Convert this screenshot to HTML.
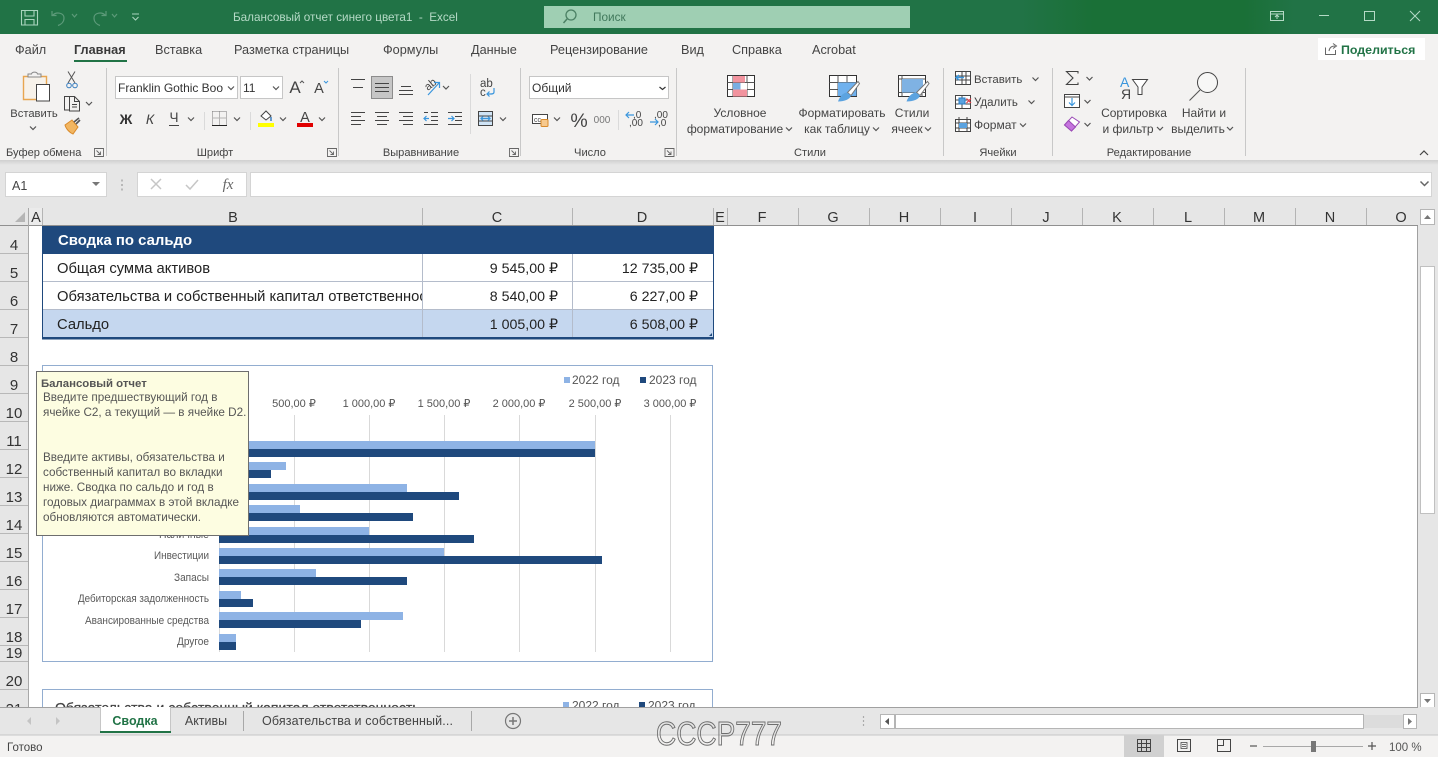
<!DOCTYPE html>
<html lang="ru"><head><meta charset="utf-8"><title>Балансовый отчет</title>
<style>
html,body{margin:0;padding:0;background:#fff;overflow:hidden}
svg{display:block}
text{font-family:"Liberation Sans","DejaVu Sans",sans-serif;white-space:pre}
.r{font-size:12px;fill:#444}
.g{font-size:11.1px;fill:#444}
.m{text-anchor:middle}
.e{text-anchor:end}
.tab{font-size:12.7px;fill:#444}
.h{font-size:14.5px;fill:#333;text-anchor:middle}
.n{font-size:15px;fill:#333;text-anchor:middle}
.c{font-size:14.75px;fill:#222}
.cr{font-size:14.2px;fill:#222;text-anchor:end}
.ax{font-size:11px;fill:#555;text-anchor:middle}
.cat{font-size:11.2px;fill:#595959;text-anchor:end}
.tip{font-size:11.7px;fill:#555}
.leg{font-size:12px;fill:#555}
.i{fill:none;stroke:#444;stroke-width:1}
.b{fill:none;stroke:#3a96dd;stroke-width:1.2}
.l1{fill:#8eb3e5}.d1{fill:#1f497d}
</style></head><body>
<svg xmlns="http://www.w3.org/2000/svg" width="1438" height="757" viewBox="0 0 1438 757">
<defs>
<path id="chev" d="M-3 -1.5L0 1.5L3 -1.5" fill="none" stroke="#555" stroke-width="1.2"/>
<g id="launch"><path d="M0 0H9V8H0Z M2 2L6 6M6 3V6H3" fill="none" stroke="#666" stroke-width=".9"/></g>
<clipPath id="b6"><rect x="43" y="282" width="379" height="28"/></clipPath>
<linearGradient id="tb" x1="0" y1="0" x2="1" y2="0">
<stop offset="0" stop-color="#217346"/><stop offset=".71" stop-color="#217346"/><stop offset=".76" stop-color="#1a7037"/><stop offset=".865" stop-color="#1a7037"/><stop offset=".9" stop-color="#217346"/><stop offset="1" stop-color="#217346"/>
</linearGradient>
<linearGradient id="sh" x1="0" y1="0" x2="0" y2="1"><stop offset="0" stop-color="#cfcfcf"/><stop offset="1" stop-color="#e6e6e6"/></linearGradient>
</defs>
<rect width="1438" height="757" fill="#fff"/>

<!-- title bar -->
<rect width="1438" height="34" fill="url(#tb)"/>
<g fill="none" stroke="#a9d4bd" stroke-width="1.1">
<path d="M21.5 10.5H37.5V25H21.5Z M25 10.5V16H34V10.5 M25 25V19.5H34V25"/>
</g>
<g fill="none" stroke="#5c9a79" stroke-width="1.2">
<path d="M52 11V15.5H56.5 M52.5 15.5C56 11.5 64 12.5 64 18C64 22 61 24.5 58 25.5"/>
<path d="M72 14L74.5 17L77 14"/>
<path d="M106 11V15.5H101.500 M105.500 15.500C102 11.500 94 12.500 94 18C94 22 97 24.500 100 25.500"/>
<path d="M112 14L114.500 17L117 14"/>
</g>
<path d="M132 14H139 M132.500 17L135.500 20L138.500 17" fill="none" stroke="#a9d4bd" stroke-width="1.100"/>
<text x="233" y="21" font-size="11.700" fill="#b5dac6">Балансовый отчет синего цвета1  -  Excel</text>
<rect x="544" y="6" width="366" height="22" fill="#9fcfb3"/>
<circle cx="571" cy="15" r="5" fill="none" stroke="#4b8064" stroke-width="1.300"/>
<path d="M567 19L563.500 23" stroke="#4b8064" stroke-width="1.500"/>
<text x="593" y="21" font-size="11.800" fill="#41795c">Поиск</text>
<g fill="none" stroke="#b5dac6" stroke-width="1">
<path d="M1270.500 11.500H1283.500V20.500H1270.500Z M1270.500 14H1283.500 M1277 19V15.500 M1275 17L1277 15L1279 17"/>
<path d="M1319 15.500H1329"/>
<path d="M1364.500 11.500H1374.500V20.500H1364.500Z"/>
<path d="M1410 11L1420 21 M1420 11L1410 21"/>
</g>

<!-- ribbon -->
<rect y="34" width="1438" height="126" fill="#f3f2f1"/>
<rect y="160" width="1438" height="48" fill="#e6e6e6"/>
<rect y="160" width="1438" height="5" fill="url(#sh)"/>
<text x="15" y="54" class="tab">Файл</text>
<text x="74" y="54" class="tab" font-weight="bold" style="fill:#3a3a3a">Главная</text>
<text x="155" y="54" class="tab">Вставка</text>
<text x="234" y="54" class="tab">Разметка страницы</text>
<text x="383" y="54" class="tab">Формулы</text>
<text x="471" y="54" class="tab">Данные</text>
<text x="550" y="54" class="tab">Рецензирование</text>
<text x="681" y="54" class="tab">Вид</text>
<text x="732" y="54" class="tab">Справка</text>
<text x="812" y="54" class="tab">Acrobat</text>
<rect x="74" y="60" width="53" height="2" fill="#217346"/>
<rect x="1318" y="38" width="107" height="22" fill="#fff"/>
<path d="M1325.500 47.500V54.500H1335.500V50 M1329 51C1329.500 47.500 1332 46 1335 46 M1333 43.500L1336.500 46L1333 48.500" fill="none" stroke="#666" stroke-width="1"/>
<text x="1341" y="54" font-size="12.400" font-weight="bold" fill="#217346">Поделиться</text>

<!-- group separators -->
<g stroke="#c8c8c8" stroke-width="1">
<path d="M106.500 68V156M338.500 68V156M520.500 68V156M676.500 68V156M943.500 68V156M1052.500 68V156M1245.500 68V156"/>
<path d="M204.500 112V130M250.500 112V130M470.500 74V134M618.500 110V130" stroke="#dadada"/>
</g>

<!-- clipboard -->
<path d="M23.500 76.500H46.500V99.500H23.500Z" fill="#f7f2ea" stroke="#e8a650" stroke-width="1.400"/>
<path d="M28 77V74H31.500C32 71.500 37 71.500 37.500 74H41V77Z" fill="#f3f2f1" stroke="#888"/>
<rect x="36.500" y="84.500" width="13" height="16.500" fill="#fff" stroke="#444"/>
<text x="34" y="117" class="r m" style="font-size:11.200px">Вставить</text>
<use href="#chev" x="33" y="128"/>
<g class="i">
<path d="M68 71.500L75 83M75 71.500L68 83" stroke="#555"/>
<circle cx="69" cy="85.500" r="2.300" stroke="#3a7fc0"/><circle cx="75" cy="85.500" r="2.300" stroke="#3a7fc0"/>
<path d="M69.500 96.500H64.500V110H69 M69.500 100.500V96.500H74.500L79.500 101.500V111H69.500V100.500 M74.500 96.500V101.500H79.500 M72 104.500H77M72 107H77"/>
</g>
<use href="#chev" x="89" y="103.500"/>
<path d="M65 125L72 120L78 127L73 134C70 133 66 129 65 125Z" fill="#f2b661" stroke="#d98a2b"/>
<path d="M74 122L79 118M76 124L80 120" stroke="#555" stroke-width="1.600"/>
<text x="6" y="156" class="g">Буфер обмена</text>
<use href="#launch" x="94.500" y="148.500"/>

<!-- font -->
<rect x="115.500" y="76.500" width="122" height="22" fill="#fff" stroke="#c6c6c6"/>
<rect x="240.500" y="76.500" width="42" height="22" fill="#fff" stroke="#c6c6c6"/>
<text x="118" y="92" font-size="12" fill="#333" textLength="105">Franklin Gothic Boo</text>
<text x="243" y="92" font-size="12" fill="#333">11</text>
<use href="#chev" x="231" y="88"/><use href="#chev" x="276" y="88"/>
<text x="295" y="93" font-size="17" fill="#444" class="m">A</text>
<path d="M300 83L302 81L304 83" fill="none" stroke="#555"/>
<text x="319" y="93" font-size="14.500" fill="#444" class="m">A</text>
<path d="M324 81L326 83L328 81" fill="none" stroke="#3a96dd"/>
<text x="126" y="124" font-size="14" font-weight="bold" fill="#333" class="m">Ж</text>
<text x="150" y="124" font-size="14" font-style="italic" fill="#444" class="m">К</text>
<text x="174" y="122" font-size="13.500" fill="#444" class="m">Ч</text>
<path d="M169 125.500H179" stroke="#444"/>
<use href="#chev" x="191" y="119"/>
<path d="M212.500 111.500H226.500V125 M212.500 111.500V125 M219.500 111.500V125 M212.500 118H226.500" fill="none" stroke="#777" stroke-dasharray="1 1"/>
<path d="M212 125.500H227" stroke="#222"/>
<use href="#chev" x="237" y="119"/>
<path d="M261 116L266 111L271 116L266 120Z" fill="#fff" stroke="#444"/>
<path d="M271 117V121" stroke="#3a7fc0" stroke-width="1.500"/>
<rect x="258" y="123" width="16" height="4" fill="#ffff00"/>
<use href="#chev" x="283" y="119"/>
<text x="305" y="122" font-size="14.500" fill="#444" class="m">A</text>
<rect x="297" y="123" width="16" height="4" fill="#e00000"/>
<use href="#chev" x="322" y="119"/>
<text x="215" y="156" class="g m">Шрифт</text>
<use href="#launch" x="327.500" y="148.500"/>

<!-- alignment -->
<rect x="371.500" y="76.500" width="21" height="22" fill="#c6c6c6" stroke="#8c8c8c"/>
<g stroke="#444" stroke-width="1" fill="none">
<path d="M351 79.500H365M353 87.500H363"/>
<path d="M375 83.500H389M375 87.500H389M375 91.500H389"/>
<path d="M401 86.500H411M399 90.500H413M399 94.500H413"/>
<path d="M351 112.500H365M351 116.500H361M351 120.500H365M351 124.500H361"/>
<path d="M375 112.500H389M377 116.500H387M375 120.500H389M377 124.500H387"/>
<path d="M399 112.500H413M403 116.500H413M399 120.500H413M403 124.500H413"/>
<path d="M431 112.500H438M431 116.500H438M431 120.500H438M424 124.500H438M424 112.500H428"/>
<path d="M448 112.500H462M455 116.500H462M455 120.500H462M448 124.500H462"/>
</g>
<path d="M429 118.500H424M426.500 116L424 118.500L426.500 121" class="b"/>
<path d="M448 118.500H454M451.500 116L454 118.500L451.500 121" class="b"/>
<text x="428" y="91" font-size="11" fill="#444" transform="rotate(-40 428 91)">ab</text>
<path d="M428 95L439 83M434 82.500H439.500V88" class="b"/>
<use href="#chev" x="446" y="87.500"/>
<text x="480" y="87" font-size="11.500" fill="#444">ab</text>
<text x="480" y="96" font-size="11.500" fill="#444">c</text>
<path d="M494 88V92C494 94 492 94 490 94H487M489.500 91.500L487 94L489.500 96.500" class="b"/>
<path d="M478.500 111.500H492.500V125.500H478.500Z M478.500 116H492.500M478.500 121H492.500" fill="#cfe4f6" stroke="#444"/>
<path d="M481 118.500H490M483 116.500L481 118.500L483 120.500M488 116.500L490 118.500L488 120.500" class="b"/>
<use href="#chev" x="503" y="119"/>
<text x="421" y="156" class="g m">Выравнивание</text>
<use href="#launch" x="509.500" y="148.500"/>

<!-- number -->
<rect x="529.500" y="76.500" width="139" height="22" fill="#fff" stroke="#c6c6c6"/>
<text x="532" y="92" font-size="12" fill="#333">Общий</text>
<path d="M659.500 87L662.500 89.500L665.500 87" fill="none" stroke="#333" stroke-width="1.200"/>
<rect x="532.500" y="114.500" width="15" height="9" fill="#fff" stroke="#444"/>
<text x="534" y="122" font-size="7" fill="#444">cc</text>
<rect x="541" y="119.500" width="7" height="7" rx="1" fill="#f7c98d" stroke="#d98a2b"/>
<use href="#chev" x="557" y="119"/>
<text x="579" y="127" font-size="19.500" fill="#444" class="m">%</text>
<text x="602" y="123" font-size="10" fill="#777" class="m">000</text>
<text x="633" y="118" font-size="10" fill="#444">,0</text>
<text x="629" y="126" font-size="10" fill="#444">,00</text>
<path d="M634 115H626M629 112L626 115L629 118" class="b"/>
<text x="654" y="118" font-size="10" fill="#444">,00</text>
<text x="658" y="126" font-size="10" fill="#444">,0</text>
<path d="M650 122H658M655 119L658 122L655 125" class="b"/>
<text x="590" y="156" class="g m">Число</text>
<use href="#launch" x="665" y="148.500"/>

<!-- styles -->
<rect x="727.500" y="75.500" width="27" height="21" fill="#fff" stroke="#333"/>
<path d="M727.500 82.500H754.500M727.500 89.500H754.500M733 75.500V96.500M740 75.500V96.500M747 75.500V96.500" stroke="#555" fill="none"/>
<rect x="733" y="76" width="12" height="6.500" fill="#f2949f"/>
<rect x="733" y="89.500" width="14" height="7" fill="#f2949f"/>
<rect x="733" y="83" width="7.500" height="6.500" fill="#79aee3"/>
<rect x="740.500" y="83" width="6.500" height="6.500" fill="#fff"/>
<text x="740" y="117" class="r m">Условное</text>
<text x="735" y="133" class="r m">форматирование</text>
<use href="#chev" x="789" y="129"/>
<rect x="829.500" y="75.500" width="27" height="21" fill="#fff" stroke="#333"/>
<path d="M829.500 82.500H856.500M829.500 89.500H856.500M838 75.500V96.500M847 75.500V96.500" stroke="#555" fill="none"/>
<rect x="838" y="82.500" width="18.500" height="13.500" fill="#6fb1ee"/>
<path d="M858 81.500L847.500 92.500L851 95.500L859.500 83.500Z" fill="#fff" stroke="#777"/>
<path d="M838 101.500C840 96 843 93 847 92.500L851 95.500C850 99.500 844 101.500 838 101.500Z" fill="#5ba3e0"/>
<text x="842" y="117" class="r m">Форматировать</text>
<text x="837" y="133" class="r m">как таблицу</text>
<use href="#chev" x="876" y="129"/>
<rect x="898.500" y="75.500" width="27" height="21" fill="#fff" stroke="#333"/>
<path d="M898.500 92.500H925.500M902 75.500V96.500M914 92.500V96.500M922 92.500V96.500M898.500 79H925.500" stroke="#555" fill="none"/>
<rect x="902" y="79" width="21" height="13.500" fill="#7fb2e3"/>
<path d="M927.500 81.500L916.500 92.500L920 95.500L929 83.500Z" fill="#fff" stroke="#777"/>
<path d="M906.500 101.500C908.500 96 912 93 916 92.500L920 95.500C919 99.500 913 101.500 906.500 101.500Z" fill="#5ba3e0"/>
<text x="912" y="117" class="r m">Стили</text>
<text x="907" y="133" class="r m">ячеек</text>
<use href="#chev" x="928" y="129"/>
<text x="810" y="156" class="g m">Стили</text>

<!-- cells -->
<path d="M955.500 71.500H970.500V84.500H955.500ZM955.500 76H970.500M955.500 80H970.500M962 71.500V84.500M966 71.500V84.500" fill="#fff" stroke="#444"/>
<path d="M964 77.500H956M959 75L956 77.500L959 80" stroke="#3a96dd" stroke-width="1.400" fill="none"/>
<text x="974" y="83" class="r" style="font-size:11.400px">Вставить</text><use href="#chev" x="1035.500" y="79"/>
<path d="M955.500 95.500H970.500V108.500H955.500ZM955.500 100H970.500M955.500 104H970.500M962 95.500V108.500" fill="#fff" stroke="#444"/>
<rect x="959" y="98" width="6" height="6" fill="#5ba3e0" stroke="#2b7cc4"/>
<path d="M966.500 98.500L971 103M971 98.500L966.500 103" stroke="#e0404a" fill="none" stroke-width="1.200"/>
<text x="974" y="106" class="r" style="font-size:11.500px">Удалить</text><use href="#chev" x="1031.500" y="102"/>
<path d="M955.500 119.500H970.500V131.500H955.500ZM955.500 123H970.500M955.500 128H970.500M959 117V131.500M967 117V131.500" fill="#fff" stroke="#444"/>
<rect x="959" y="123" width="8" height="5" fill="#5ba3e0"/>
<text x="974" y="129" class="r">Формат</text><use href="#chev" x="1023" y="125"/>
<text x="998" y="156" class="g m">Ячейки</text>

<!-- editing -->
<path d="M1078 73.500V71.500H1066.500L1073 78L1066.500 84.500H1078V82.500" fill="none" stroke="#444" stroke-width="1.100"/>
<use href="#chev" x="1089.500" y="78.500"/>
<rect x="1064.500" y="94.500" width="15" height="13" fill="#fff" stroke="#444"/>
<path d="M1064.500 97H1079.500" stroke="#444"/>
<path d="M1072 98V105.500M1069 102.500L1072 105.500L1075 102.500" class="b"/>
<use href="#chev" x="1087.500" y="101.500"/>
<path d="M1064.500 125L1072 117L1079.500 122L1071.500 131Z" fill="#fff" stroke="#9a4ab5"/>
<path d="M1064.500 125L1068.500 120.500L1075.500 127L1071.500 131Z" fill="#c574de" stroke="#9a4ab5"/>
<use href="#chev" x="1087.500" y="124.500"/>
<text x="1120" y="87" font-size="14" fill="#3a96dd">А</text>
<text x="1121" y="99" font-size="14" fill="#444">Я</text>
<path d="M1132.500 79.500H1147.500L1142 87V94.500H1138V87Z" fill="#fff" stroke="#444"/>
<text x="1134" y="117" class="r m">Сортировка</text>
<text x="1128" y="133" class="r m">и фильтр</text>
<use href="#chev" x="1160" y="128.500"/>
<circle cx="1207.500" cy="82.500" r="10" fill="#f7f7f6" stroke="#444"/>
<path d="M1200 90L1189.500 100.500" stroke="#555" stroke-width="1.100"/>
<text x="1204" y="117" class="r m">Найти и</text>
<text x="1198" y="133" class="r m">выделить</text>
<use href="#chev" x="1230" y="128.500"/>
<text x="1149" y="156" class="g m">Редактирование</text>
<path d="M1420 155L1424 151L1428 155" fill="none" stroke="#444" stroke-width="1.200"/>

<!-- formula bar -->
<rect x="5.500" y="172.500" width="101" height="24" fill="#fff" stroke="#d4d4d4"/>
<text x="12" y="190" font-size="12.500" fill="#444">A1</text>
<path d="M92 182H100L96 186Z" fill="#777"/>
<path d="M122 179.500v2M122 184v2M122 188.500v2" stroke="#999" stroke-width="1.200"/>
<rect x="137.500" y="172.500" width="109" height="24" fill="#fff" stroke="#d4d4d4"/>
<path d="M151 179L161 189M161 179L151 189" stroke="#c6c6c6" stroke-width="1.500"/>
<path d="M186 185L190 189L198 180" fill="none" stroke="#c6c6c6" stroke-width="1.500"/>
<text x="228" y="189" font-size="15" font-style="italic" fill="#666" class="m" style="font-family:'Liberation Serif',serif">fx</text>
<rect x="250.500" y="172.500" width="1181" height="24" fill="#fff" stroke="#d4d4d4"/>
<path d="M1420.500 181.500L1424.500 185.500L1428.500 181.500" fill="none" stroke="#666" stroke-width="1.500"/>

<!-- headers -->
<rect x="0" y="208" width="1438" height="18" fill="#e6e6e6"/>
<rect x="0" y="208" width="29" height="499" fill="#e6e6e6"/>
<path d="M25 212V222H15Z" fill="#b5b5b5"/>
<rect x="29" y="208" width="14" height="18" fill="#ebebeb"/>
<g stroke="#b4b4b4"><path d="M28.500 208V226M42.500 208V226M422.500 208V226M572.500 208V226M713.500 208V226M727.500 208V226M798.500 208V226M869.500 208V226M940.500 208V226M1011.500 208V226M1082.500 208V226M1153.500 208V226M1224.500 208V226M1295.500 208V226M1366.500 208V226"/></g>
<rect x="0" y="225" width="1418" height="1" fill="#909090"/>
<rect x="28" y="208" width="1" height="499" fill="#a8a8a8"/>
<text class="h" x="36" y="222">A</text><text class="h" x="233" y="222">B</text><text class="h" x="497" y="222">C</text><text class="h" x="642" y="222">D</text><text class="h" x="720" y="222">E</text><text class="h" x="762" y="222">F</text><text class="h" x="833" y="222">G</text><text class="h" x="904" y="222">H</text><text class="h" x="975" y="222">I</text><text class="h" x="1046" y="222">J</text><text class="h" x="1117" y="222">K</text><text class="h" x="1188" y="222">L</text><text class="h" x="1259" y="222">M</text><text class="h" x="1330" y="222">N</text><text class="h" x="1401" y="222">O</text>
<path d="M0 253.500H28M0 281.500H28M0 309.500H28M0 337.500H28M0 365.500H28M0 393.500H28M0 421.500H28M0 449.500H28M0 477.500H28M0 505.500H28M0 533.500H28M0 561.500H28M0 589.500H28M0 617.500H28M0 645.500H28M0 661.500H28M0 689.500H28" stroke="#b8b8b8"/>
<text class="n" x="14" y="250">4</text><text class="n" x="14" y="278">5</text><text class="n" x="14" y="306">6</text><text class="n" x="14" y="334">7</text><text class="n" x="14" y="362">8</text><text class="n" x="14" y="390">9</text><text class="n" x="14" y="418">10</text><text class="n" x="14" y="446">11</text><text class="n" x="14" y="474">12</text><text class="n" x="14" y="502">13</text><text class="n" x="14" y="530">14</text><text class="n" x="14" y="558">15</text><text class="n" x="14" y="586">16</text><text class="n" x="14" y="614">17</text><text class="n" x="14" y="642">18</text><text class="n" x="14" y="658">19</text><text class="n" x="14" y="686">20</text><text class="n" x="14" y="714">21</text>

<!-- table -->
<rect x="42" y="226" width="672" height="28" fill="#1f497d"/>
<rect x="43" y="310" width="670" height="27" fill="#c5d7ef"/>
<path d="M43 281.500H713M43 309.500H713M422.500 254V337M572.500 254V337" stroke="#b4bccb"/>
<path d="M42.500 226V339M713.500 226V339" stroke="#1f497d"/>
<rect x="42" y="337" width="672" height="2.500" fill="#1f497d"/>
<path d="M712 333V336H709Z" fill="#1f497d"/>
<text x="58" y="245" font-size="14.900" font-weight="bold" fill="#fff">Сводка по сальдо</text>
<text class="c" x="57" y="273">Общая сумма активов</text>
<text class="c" x="57" y="301" clip-path="url(#b6)">Обязательства и собственный капитал ответственность</text>
<text class="c" x="57" y="329">Сальдо</text>
<text class="cr" x="558" y="273">9 545,00 ₽</text><text class="cr" x="698" y="273">12 735,00 ₽</text>
<text class="cr" x="558" y="301">8 540,00 ₽</text><text class="cr" x="698" y="301">6 227,00 ₽</text>
<text class="cr" x="558" y="329">1 005,00 ₽</text><text class="cr" x="698" y="329">6 508,00 ₽</text>

<!-- chart 1 -->
<rect x="42.500" y="365.500" width="670" height="296" fill="#fff" stroke="#92add0"/>
<path d="M219.500 415V652M294.500 415V652M369.500 415V652M444.500 415V652M519.500 415V652M595.500 415V652M670.500 415V652" stroke="#d9d9d9"/>
<rect x="564" y="377" width="6" height="6" fill="#8eb3e5"/><text x="572" y="384" class="leg">2022 год</text>
<rect x="640" y="377" width="6" height="6" fill="#1f497d"/><text x="649" y="384" class="leg">2023 год</text>
<text class="ax" x="294" y="407">500,00 ₽</text><text class="ax" x="369" y="407">1 000,00 ₽</text><text class="ax" x="444" y="407">1 500,00 ₽</text><text class="ax" x="519" y="407">2 000,00 ₽</text><text class="ax" x="595" y="407">2 500,00 ₽</text><text class="ax" x="670" y="407">3 000,00 ₽</text>
<rect class="l1" x="219" y="441" width="376" height="8"/><rect class="d1" x="219" y="449" width="376" height="8"/>
<rect class="l1" x="219" y="462" width="67" height="8"/><rect class="d1" x="219" y="470" width="52" height="8"/>
<rect class="l1" x="219" y="484" width="188" height="8"/><rect class="d1" x="219" y="492" width="240" height="8"/>
<rect class="l1" x="219" y="505" width="81" height="8"/><rect class="d1" x="219" y="513" width="194" height="8"/>
<rect class="l1" x="219" y="527" width="150" height="8"/><rect class="d1" x="219" y="535" width="255" height="8"/>
<rect class="l1" x="219" y="548" width="225" height="8"/><rect class="d1" x="219" y="556" width="383" height="8"/>
<rect class="l1" x="219" y="569" width="97" height="8"/><rect class="d1" x="219" y="577" width="188" height="8"/>
<rect class="l1" x="219" y="591" width="22" height="8"/><rect class="d1" x="219" y="599" width="34" height="8"/>
<rect class="l1" x="219" y="612" width="184" height="8"/><rect class="d1" x="219" y="620" width="142" height="8"/>
<rect class="l1" x="219" y="634" width="17" height="8"/><rect class="d1" x="219" y="642" width="17" height="8"/>
<text class="cat" x="209" y="538" textLength="50" lengthAdjust="spacingAndGlyphs">Наличные</text>
<text class="cat" x="209" y="559" textLength="55" lengthAdjust="spacingAndGlyphs">Инвестиции</text>
<text class="cat" x="209" y="581" textLength="35" lengthAdjust="spacingAndGlyphs">Запасы</text>
<text class="cat" x="209" y="602" textLength="131" lengthAdjust="spacingAndGlyphs">Дебиторская задолженность</text>
<text class="cat" x="209" y="624" textLength="124" lengthAdjust="spacingAndGlyphs">Авансированные средства</text>
<text class="cat" x="209" y="645" textLength="32" lengthAdjust="spacingAndGlyphs">Другое</text>

<!-- chart 2 -->
<rect x="42.500" y="689.500" width="670" height="60" fill="#fff" stroke="#92add0"/>
<text x="55" y="712.500" font-size="14" fill="#444" stroke="#444" stroke-width=".3">Обязательства и собственный капитал ответственность</text>
<rect x="563" y="702" width="6" height="6" fill="#8eb3e5"/><text x="572" y="709.500" class="leg">2022 год</text>
<rect x="639" y="702" width="6" height="6" fill="#1f497d"/><text x="648" y="709.500" class="leg">2023 год</text>

<!-- tooltip -->
<rect x="36.500" y="371.500" width="212" height="164" fill="#fdfde1" stroke="#6e6e6e"/>
<text x="41" y="387" class="tip" font-weight="bold" style="font-size:11.400px">Балансовый отчет</text>
<text x="43" y="401" class="tip">Введите предшествующий год в</text>
<text x="43" y="416" class="tip">ячейке C2, а текущий — в ячейке D2.</text>
<text x="43" y="461" class="tip">Введите активы, обязательства и</text>
<text x="43" y="476" class="tip">собственный капитал во вкладки</text>
<text x="43" y="491" class="tip">ниже. Сводка по сальдо и год в</text>
<text x="43" y="506" class="tip">годовых диаграммах в этой вкладке</text>
<text x="43" y="521" class="tip">обновляются автоматически.</text>

<!-- vertical scrollbar -->
<rect x="1418" y="208" width="20" height="500" fill="#e6e6e6"/>
<rect x="1417" y="226" width="1" height="481" fill="#a0a0a0"/>
<rect x="1420.500" y="209.500" width="14" height="15" fill="#fff" stroke="#b5b5b5"/>
<path d="M1424 219L1427.500 215L1431 219Z" fill="#777"/>
<rect x="1420.500" y="266.500" width="14" height="247" fill="#fff" stroke="#c0c0c0"/>
<rect x="1420.500" y="693.500" width="14" height="14" fill="#fff" stroke="#b5b5b5"/>
<path d="M1424 699H1431L1427.500 703Z" fill="#777"/>

<!-- tab bar -->
<rect x="0" y="707" width="1438" height="28" fill="#e6e6e6"/>
<rect x="0" y="707" width="1418" height="1" fill="#a0a0a0"/>
<rect x="0" y="735" width="1438" height="22" fill="#f3f2f1"/>
<rect x="0" y="734.500" width="1438" height="1" fill="#c6c6c6"/>
<path d="M31 717V725L27 721ZM56 717V725L60 721Z" fill="#c4c4c4"/>
<rect x="100" y="707" width="71" height="25" fill="#fff"/>
<rect x="100" y="731" width="71" height="2" fill="#217346"/>
<path d="M100.500 707V731M170.500 707V731" stroke="#c6c6c6"/>
<text x="135" y="725" font-size="12.500" font-weight="bold" fill="#217346" class="m">Сводка</text>
<text x="206" y="725" font-size="12.500" fill="#444" class="m">Активы</text>
<path d="M243.500 711V731M471.500 711V731" stroke="#a8a8a8"/>
<text x="262" y="725" font-size="12.500" fill="#444" textLength="191">Обязательства и собственный...</text>
<circle cx="513" cy="721" r="7.500" fill="none" stroke="#777" stroke-width="1.200"/>
<path d="M513 717V725M509 721H517" stroke="#777" stroke-width="1.500"/>
<path d="M863.500 716v2M863.500 720v2M863.500 724v2" stroke="#aaa" stroke-width="1.200"/>
<rect x="880.500" y="714.500" width="14" height="14" fill="#fff" stroke="#b5b5b5"/>
<path d="M889 718V725L885 721.500Z" fill="#555"/>
<rect x="895.500" y="714.500" width="468" height="14" fill="#fff" stroke="#b5b5b5"/>
<rect x="1364" y="715" width="39" height="13" fill="#dcdcdc"/>
<rect x="1403.500" y="714.500" width="13" height="14" fill="#fff" stroke="#b5b5b5"/>
<path d="M1408 718V725L1412 721.500Z" fill="#777"/>

<!-- status bar -->
<text x="7" y="751" font-size="11.500" fill="#444">Готово</text>
<rect x="1124" y="735" width="40" height="22" fill="#d0d0d0"/>
<path d="M1137.500 739.500H1150.500V751.500H1137.500ZM1137.500 743.500H1150.500M1137.500 747.500H1150.500M1141.500 739.500V751.500M1146.500 739.500V751.500" fill="none" stroke="#444"/>
<path d="M1177.500 739.500H1190.500V751.500H1177.500Z" fill="none" stroke="#444"/>
<path d="M1181 742.500H1187V748.500H1181ZM1182 744.500H1186M1182 746.500H1186" fill="none" stroke="#444" stroke-width=".8"/>
<path d="M1217.500 739.500H1230.500V751.500H1217.500ZM1217.500 745.500H1223.500V739.500" fill="none" stroke="#444"/>
<path d="M1250 746H1257" stroke="#555" stroke-width="1.200"/>
<path d="M1263 746.500H1363" stroke="#a8a8a8"/>
<rect x="1311" y="741" width="5" height="11" fill="#777"/>
<path d="M1368 746H1376M1372 742V750" stroke="#555" stroke-width="1.200"/>
<text x="1389" y="751" font-size="11.500" fill="#555">100 %</text>

<!-- watermark -->
<text x="656" y="745" font-size="33" fill="none" stroke="#6e6e6e" stroke-width="1" textLength="126" lengthAdjust="spacingAndGlyphs">СССР777</text>
</svg>
</body></html>
